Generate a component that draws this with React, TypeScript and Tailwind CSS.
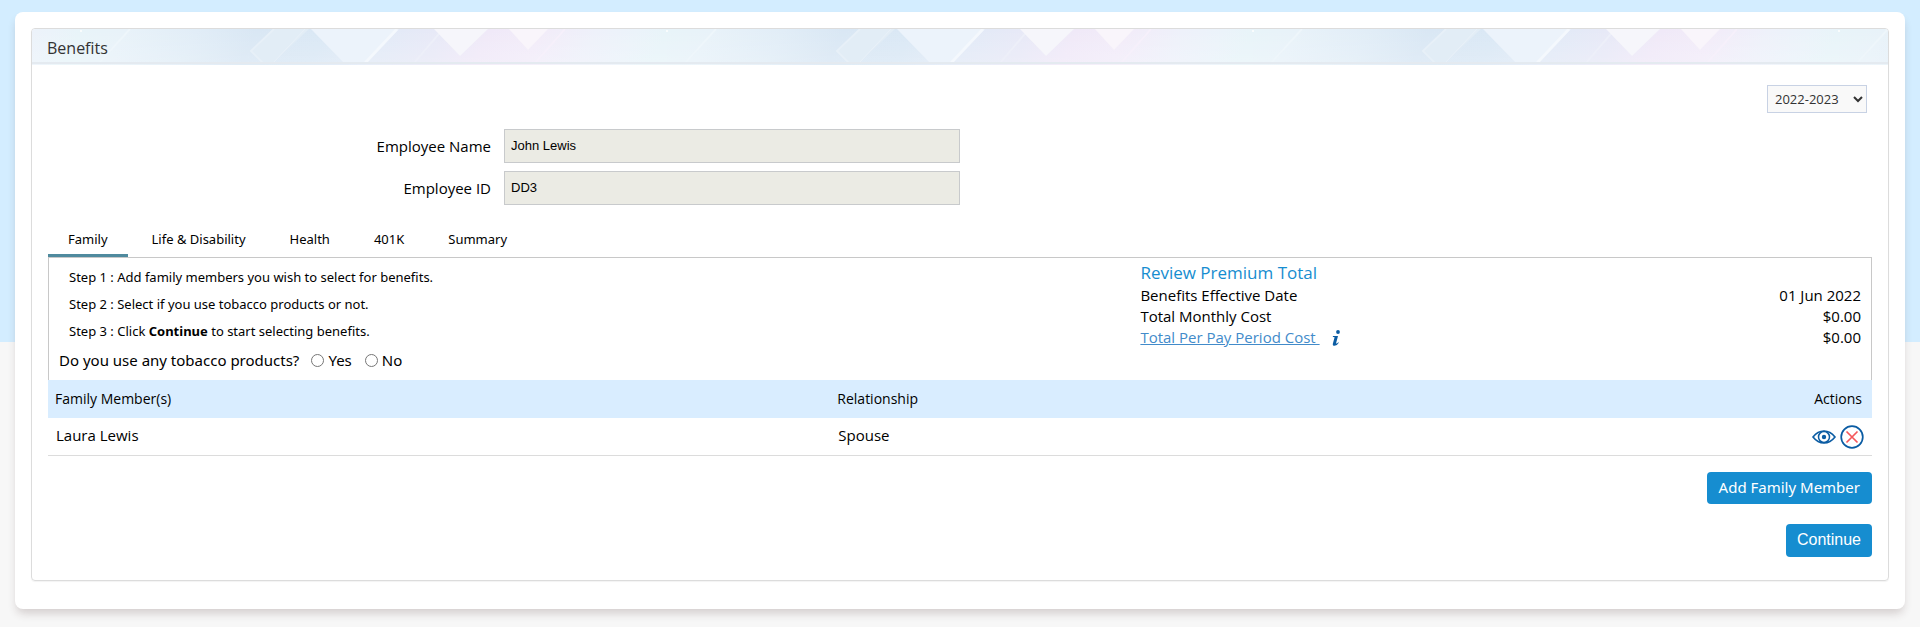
import { useState } from "react";

const TABS = ["Family", "Life & Disability", "Health", "401K", "Summary"];

const EMPLOYEE = [
  { id: "employee-name", label: "Employee Name", value: "John Lewis" },
  { id: "employee-id", label: "Employee ID", value: "DD3" },
];

const MEMBERS = [{ name: "Laura Lewis", relationship: "Spouse" }];

// Repeating diamond artwork behind the panel title
function HeaderArt() {
  return (
    <svg className="absolute inset-0 h-full w-full" aria-hidden="true">
      <defs>
        <linearGradient id="wash" x1="0" x2="1" y1="0" y2="0.03">
          <stop offset="0" stopColor="#e8f4f9" />
          <stop offset="0.08" stopColor="#e8f2f9" />
          <stop offset="0.2" stopColor="#e1edf7" />
          <stop offset="0.3" stopColor="#d9e7f4" />
          <stop offset="0.42" stopColor="#dae8f5" />
          <stop offset="0.52" stopColor="#e2eaf7" />
          <stop offset="0.62" stopColor="#e8e9f7" />
          <stop offset="0.7" stopColor="#f0e9f8" />
          <stop offset="0.79" stopColor="#f2ecf9" />
          <stop offset="0.88" stopColor="#eef1fa" />
          <stop offset="0.95" stopColor="#ebf3fa" />
          <stop offset="1" stopColor="#e8f4f9" />
        </linearGradient>
        <linearGradient id="shade" x1="0" x2="0" y1="0" y2="1">
          <stop offset="0" stopColor="#fff" stopOpacity="0" />
          <stop offset="1" stopColor="#fff" stopOpacity="0.2" />
        </linearGradient>
        <pattern id="tile" x="49" y="0" width="586" height="36" patternUnits="userSpaceOnUse">
          <rect width="586" height="36" fill="url(#wash)" />
          <rect width="586" height="36" fill="url(#shade)" />
          <path d="M49 0L18 34" stroke="#eef6fb" strokeWidth="2" />
          <path d="M193 0L170 22L182 34H192L228 0Z" fill="#e2edf6" />
          <path d="M193 0L170 22L182 34" fill="none" stroke="#e7f0f8" strokeWidth="2" />
          <path d="M224 0L192 34" stroke="#e9f1f9" />
          <path d="M230 0L263 34H285L318 0Z" fill="#ecf3fb" />
          <path d="M316 0L284 34" stroke="#f4f8fd" strokeWidth="3" />
          <path d="M362 0L333 34" stroke="#edeff9" strokeWidth="2" />
          <path d="M353 0L379 27L407 0Z" fill="#f6f6fb" />
          <path d="M428 0L447 21L467 0Z" fill="#f9f5fb" />
          <path d="M484 0L454 34" stroke="#f6f0fb" strokeWidth="2" />
          <circle cx="0" cy="2" r="1" fill="#fff" />
          <circle cx="586" cy="2" r="1" fill="#fff" />
        </pattern>
      </defs>
      <rect width="100%" height="100%" fill="url(#tile)" />
    </svg>
  );
}

function EyeIcon() {
  return (
    <svg className="h-6 w-6" viewBox="0 0 24 24" fill="none" stroke="#0b5ca3" aria-hidden="true">
      <path d="M1 12C4.500 7.500 8 6 12 6s7.500 1.500 11 6c-3.500 4.500-7 6-11 6S4.500 16.500 1 12Z" strokeWidth="1.600" />
      <circle cx="12" cy="12" r="5.500" strokeWidth="1.500" />
      <circle cx="12" cy="12" r="2.200" fill="#0b5ca3" stroke="none" />
    </svg>
  );
}

function RemoveIcon() {
  return (
    <svg className="h-6 w-6" viewBox="0 0 24 24" fill="none" aria-hidden="true">
      <circle cx="12" cy="12" r="10.800" stroke="#0b5ca3" strokeWidth="1.700" />
      <path d="M6.500 6.500L17.500 17.500M17.500 6.500L6.500 17.500" stroke="#f4575b" strokeWidth="1.700" />
    </svg>
  );
}

function InfoIcon() {
  return (
    <svg className="h-4 w-2" viewBox="0 0 8 16" fill="#0b5ca3" aria-hidden="true">
      <circle cx="6" cy="2" r="1.900" />
      <path d="M1 6H6L4 13.500Q5 13.800 6.300 12.300L6.800 12.700Q5 15.800 2.500 15.800Q0.300 15.800 0.900 13.500L2.600 7.300Q2 6.700 0.800 7Z" />
    </svg>
  );
}

function Benefits() {
  const [tab, setTab] = useState("Family");

  return (
    <section className="rounded border border-[#dcdcdc] shadow-[0_1px_1px_rgba(0,0,0,0.05)]">
      <header className="relative h-9 overflow-hidden rounded-t-[3px]">
        <HeaderArt />
        <h1 className="relative px-[15px] pt-[7px] text-[16px] leading-6 text-[#333]">Benefits</h1>
        <div className="absolute inset-x-0 bottom-[1px] h-[2px] bg-[#e4eaf0]" />
      </header>

      <div className="px-4 pb-[23px]">
        <div className="flex justify-end pt-5 pr-[5px]">
          <select
            aria-label="Plan year"
            className="h-7 w-[100px] border border-[#c8d2e4] bg-[#f9f9f9] px-[3px] text-[13px] text-[#333]"
            defaultValue="2022-2023"
          >
            <option>2022-2023</option>
          </select>
        </div>

        <div className="mt-4 flex flex-col gap-2">
          {EMPLOYEE.map(({ id, label, value }) => (
            <div key={id} className="grid grid-cols-[1fr_1fr_2fr] items-center">
              <label htmlFor={id} className="pr-[13px] text-right text-[15px]">
                {label}
              </label>
              <input
                id={id}
                readOnly
                defaultValue={value}
                className="h-[34px] border border-[#c8cacc] bg-[#ebebe4] px-[6px] pb-[2px] font-['Liberation_Sans',Arial,sans-serif] text-[13px]"
              />
            </div>
          ))}
        </div>

        <nav className="mt-4 flex gap-1 font-['Noto_Sans','Segoe_UI',sans-serif]" role="tablist">
          {TABS.map((name) => (
            <button
              key={name}
              type="button"
              role="tab"
              aria-selected={tab === name}
              onClick={() => setTab(name)}
              className={`h-9 border-b-[3px] px-5 pt-1 text-[13px] ${
                tab === name ? "border-[#4f8a9e]" : "border-transparent"
              }`}
            >
              {name}
            </button>
          ))}
        </nav>

        <div className="flex h-[123px] justify-between border border-b-0 border-[#c8c8c8]">
          <div className="pt-[6px] font-['Noto_Sans','Segoe_UI',sans-serif]">
            <div className="pl-5 text-[13px] leading-[27px]">
              <p>Step 1 : Add family members you wish to select for benefits.</p>
              <p>Step 2 : Select if you use tobacco products or not.</p>
              <p>
                Step 3 : Click <b>Continue</b> to start selecting benefits.
              </p>
            </div>
            <fieldset className="flex items-center pt-[3px] pl-[10px] text-[15px] leading-6">
              <legend className="float-left pr-3">Do you use any tobacco products?</legend>
              <label className="mr-[13px] flex items-center gap-1">
                <input type="radio" name="tobacco" className="h-[13px] w-[13px]" />
                Yes
              </label>
              <label className="flex items-center gap-1">
                <input type="radio" name="tobacco" className="h-[13px] w-[13px]" />
                No
              </label>
            </fieldset>
          </div>

          <div className="w-[40.1%] pt-[3px] pr-[10px] text-[15px] leading-[21px]">
            <h2 className="pb-[1px] text-[17px] leading-[23px] text-[#168dd0]">Review Premium Total</h2>
            <dl className="grid grid-cols-[1fr_auto]">
              <dt>Benefits Effective Date</dt>
              <dd className="text-right">01 Jun 2022</dd>
              <dt>Total Monthly Cost</dt>
              <dd className="text-right">$0.00</dd>
              <dt className="flex items-center gap-3">
                <a href="#cost" className="whitespace-pre text-[#428bca] underline">
                  {"Total Per Pay Period Cost "}
                </a>
                <InfoIcon />
              </dt>
              <dd className="text-right">$0.00</dd>
            </dl>
          </div>
        </div>

        <table className="w-full table-fixed border-b border-[#dcdcdc] text-left">
          <thead className="text-[14px]">
            <tr className="h-[38px] bg-[#d9edff]">
              <th className="w-[43%] pb-[2px] pl-[7px] font-normal">Family Member(s)</th>
              <th className="pb-[2px] pl-[5px] font-normal">Relationship</th>
              <th className="w-1/4 pr-[10px] pb-[2px] text-right font-normal">Actions</th>
            </tr>
          </thead>
          <tbody className="text-[15px]">
            {MEMBERS.map(({ name, relationship }) => (
              <tr key={name} className="h-[37px]">
                <td className="pb-[2px] pl-2">{name}</td>
                <td className="pb-[2px] pl-[6px]">{relationship}</td>
                <td className="pt-[1px] pr-2">
                  <div className="flex justify-end gap-1">
                    <button type="button" aria-label={`View ${name}`}>
                      <EyeIcon />
                    </button>
                    <button type="button" aria-label={`Remove ${name}`}>
                      <RemoveIcon />
                    </button>
                  </div>
                </td>
              </tr>
            ))}
          </tbody>
        </table>

        <div className="mt-4 flex flex-col items-end gap-5">
          <button
            type="button"
            className="h-8 rounded bg-[#168dd0] px-3 font-['Noto_Sans','Segoe_UI',sans-serif] text-[15px] text-white"
          >
            Add Family Member
          </button>
          <button
            type="button"
            className="h-[33px] rounded bg-[#168dd0] px-[11px] pb-[1px] font-['Liberation_Sans',Arial,sans-serif] text-[16px] text-white"
          >
            Continue
          </button>
        </div>
      </div>
    </section>
  );
}

export default function App() {
  return (
    <div className="min-h-screen bg-[#f7f7f7] bg-[linear-gradient(#d3edff,#d3edff)] bg-[length:100%_342px] bg-no-repeat px-[15px] pt-3 pb-[18px] font-['Open_Sans','Segoe_UI',sans-serif] text-black">
      <main className="rounded-lg bg-white px-4 pt-4 pb-7 shadow-[0_6px_10px_-2px_rgba(60,30,30,0.2)]">
        <Benefits />
      </main>
    </div>
  );
}
